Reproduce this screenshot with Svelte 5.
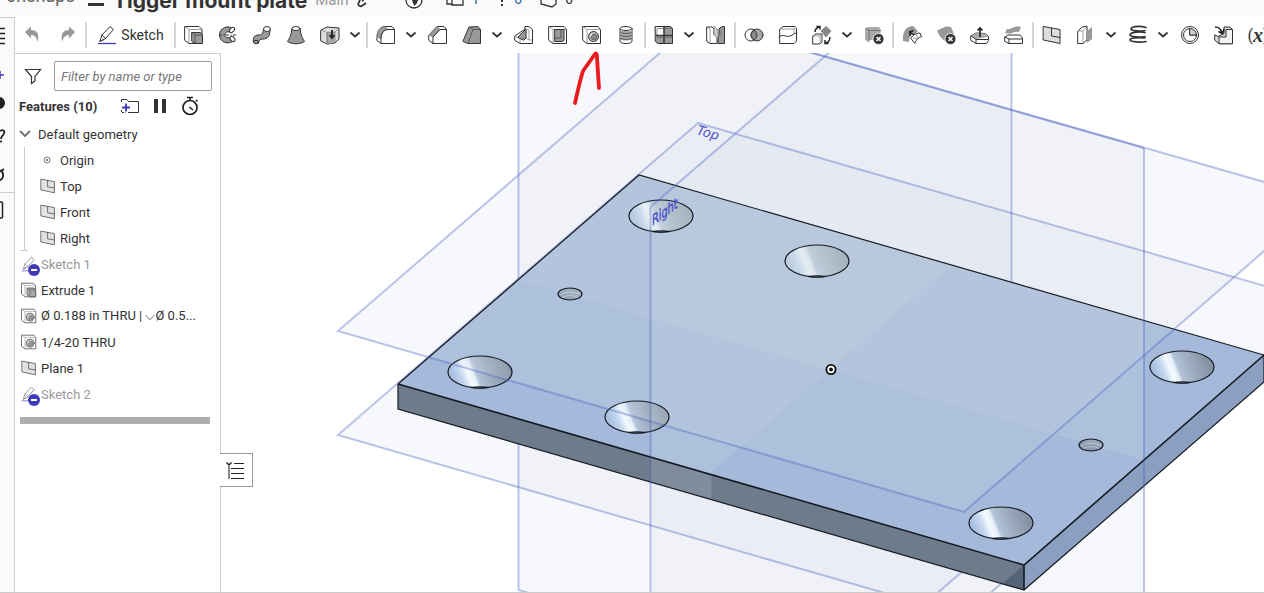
<script>
  const ink = 'stroke="#333" stroke-width="1" stroke-linejoin="round" stroke-linecap="round"';
  const thin = 'stroke="#777" stroke-width=".7" stroke-linejoin="round"';
  const badge = `<circle cx="14.500" cy="14" r="5.500" fill="#333" stroke="#fff" stroke-width=".8"/><path d="M12.500 12l4 4M16.500 12l-4 4" stroke="#fff" stroke-width="1.600"/>`;

  const icons = {
    undo: `<path d="M2 7l6-5.500v3.500c6 0 9 4 6.500 12C14 13 12 10 8 10v3.500z" fill="#999"/>`,
    redo: `<path d="M18 7l-6-5.500v3.500c-6 0-9 4-6.500 12C6 13 8 10 12 10v3.500z" fill="#999"/>`,
    sketch: `<path d="M3 16l2-6 8-8.500 3.500 3L8.500 13.500zM5 10l3.500 3.500M3 16l3-1" fill="#fff" ${ink}/><path d="M1 18.500h18" stroke="#3f3bbd" stroke-width="1.300"/>`,
    extrude: `<path d="M1 1.500h14l3 3v14H5l-4-3z" fill="#fff" ${ink}/><path d="M1 1.500l4 3h13M5 4.500v14" fill="none" ${thin}/><path d="M8 7.500h8l2.500 2v9H11l-3-2z" fill="#999" ${ink}/><path d="M8 7.500l3 2.500h7.500M11 10v8.500" fill="none" stroke="#555"/>`,
    revolve: `<path d="M14 3.500C10-.5 1.500 3 1.500 10S10 20.500 16 15.500l-3-3.500c-3 2-6 0-6-2s2-4 5-3z" fill="#999" ${ink}/><ellipse cx="14" cy="5" rx="3" ry="2" transform="rotate(-45 14 5)" fill="#fff" ${ink}/><ellipse cx="14.500" cy="14" rx="3" ry="2" transform="rotate(45 14.500 14)" fill="#fff" ${ink}/><path d="M1 10h18" stroke="#333" stroke-dasharray="3 1.500 1 1.500"/>`,
    sweep: `<path d="M1.500 17c-1-4 1-7 4.500-7 4 0 5-1 5.500-6l6.500 1c0 6-2 9-7 9-3 0-4 1-4.500 4z" fill="#999" ${ink}/><ellipse cx="15" cy="4" rx="3.500" ry="2.500" fill="#fff" ${ink}/><ellipse cx="4" cy="17" rx="2.500" ry="1.700" fill="#999" ${ink}/>`,
    loft: `<path d="M6 3.500C5.500 9 4 13 1.500 16.500c5 3 12 3 17 0C16 13 14.500 9 14 3.500z" fill="#999" ${ink}/><ellipse cx="10" cy="3.500" rx="4" ry="2" fill="#fff" ${ink}/>`,
    thicken: `<path d="M1 5l6-3 12 1v11l-4 4-8 1-6-3z" fill="#ddd" ${ink}/><path d="M7 7.500L15 7v11l-8 1z" fill="#aaa" ${thin}/><path d="M1 5l6 2.500V19M15 7l4-4" fill="none" ${thin}/><path d="M12 5v8M9.500 10l2.500 3 2.500-3" fill="none" stroke="#222" stroke-width="1.800"/>`,
    fillet: `<path d="M1 12C1 5 5 1.500 9 1.500h7l2.500 3v14H5l-4-3z" fill="#fff" ${ink}/><path d="M1 12C1 5 5 1.500 9 1.500l3 3C8 4.500 5 8 5 14z" fill="#999" ${thin}/><path d="M5 18.500V14c0-6 3-9.500 7-9.500h6.500" fill="none" ${ink}/>`,
    chamfer: `<path d="M1 10l8-8.500h7l2.500 3v14H5l-4-3z" fill="#fff" ${ink}/><path d="M1 10l8-8.500 3 3L5 12z" fill="#999" ${thin}/><path d="M5 18.500V12l7-7.500h6.500" fill="none" ${ink}/>`,
    draft: `<path d="M1 16L7 2l9-.5 2.500 3v14H6z" fill="#999" ${ink}/><path d="M6 18.500l5-14L7 2M11 4.500h7.500" fill="none" stroke="#555"/>`,
    rib: `<path d="M1 11l10-7V1.500h4l3.500 3v14H6l-5-3z" fill="#fff" ${ink}/><path d="M4 12L12 4v9l-2 2z" fill="#999" ${ink}/><path d="M1 11l5 3 6-1 3 2h3.500M6 14v4.500M12 4l3 1.500V15" fill="none" ${thin}/>`,
    shell: `<path d="M1 1.500h15l2.500 3v14H5l-4-3z" fill="#fff" ${ink}/><path d="M1 1.500l4 3v14M5 4.500h13.500" fill="none" ${thin}/><path d="M7 4.500h9v11l-2 1H7z" fill="#999" ${ink}/><path d="M13 4.500V13H7" fill="none" stroke="#555"/>`,
    hole: `<path d="M1 1.500h15l2.500 3v14H5l-4-3z" fill="#fff" ${ink}/><path d="M1 1.500l4 3v14M5 4.500h13.500" fill="none" ${thin}/><circle cx="11.500" cy="11.500" r="5" fill="#bbb" ${ink}/><circle cx="12" cy="12" r="2.800" fill="#888" stroke="#666"/><path d="M10 8.500l-1.500 3" stroke="#fff"/>`,
    thread: `<path d="M4 4v12c0 3.500 12 3.500 12 0V4" fill="#fff" ${ink}/><path d="M4 6v8c3 2 9 2 12 0V6z" fill="#aaa"/><path d="M4 7c3 2 9 2 12 0M4 10c3 2 9 2 12 0M4 13c3 2 9 2 12 0" fill="none" stroke="#555"/><ellipse cx="10" cy="3.500" rx="6" ry="2" fill="#fff" ${ink}/>`,
    pattern: `<path d="M1.500 1.500h15l2 2v15h-15l-2-2z" fill="#999" ${ink}/><path d="M2 2h7l1 2v6H3L2 9z" fill="#fff"/><path d="M10 2v17M1.500 10.500h17" fill="none" stroke="#333" stroke-width="1.500"/><path d="M3 3.500h6.500M3 3.500V10M11 3.500h7.500M11 12.500h7.500M3 12.500h6.500" fill="none" stroke="#666" stroke-width=".7"/>`,
    mirror: `<path d="M1 2h5l2 2v6l3 1.500v7H4l-3-2z" fill="#fff" ${ink}/><path d="M18.500 2v16.500H12V13l1-3V4l2-2z" fill="#999" ${ink}/><path d="M8 1l4 4v9l-4-4z" fill="#ccc" ${thin}/><path d="M1 2l3 2v14.500M15 4v8" fill="none" ${thin}/>`,
    boolean: `<circle cx="7" cy="10" r="6" fill="#fff" ${ink}/><circle cx="13" cy="10" r="6" fill="#aaa" ${ink}/><path d="M10 5c-4 3-4 7 0 10 4-3 4-7 0-10z" fill="#888" ${ink}/>`,
    split: `<path d="M2 4l3-2.500h12l1.500 2V16L16 18.500H2z" fill="#fff" ${ink}/><path d="M2 4h14v4M16 4l2-2" fill="none" ${thin}/><path d="M1 12c5-4 7 1 11-1 3-1 4-3 7-3" fill="none" ${ink}/>`,
    transform: `<path d="M1 11l3-2h6v8l-2 2H1z" fill="#fff" ${ink}/><path d="M1 11h7v8M8 11l2-2" fill="none" ${thin}/><path d="M9 6l5-4.500L19 6l-5 6z" fill="#888" ${thin}/><path d="M3 7c0-3 1-4 4-5M4.500 1.500H8v3M18 12c0 3-1 5-4 6M13 15v3.500h3.500" fill="none" stroke="#222" stroke-width="1.500"/>`,
    remove: `<path d="M1 4l2-2h12l1.500 2v11H5v2l-4-2z" fill="#aaa"/><path d="M1.500 3.500L5 5.500h12M5 5.500V17" fill="none" stroke="#666" stroke-width=".8"/>${badge}`,
    moveFace: `<path d="M1 16C0 6 5 1 11 1l5 5-3 3c-4 0-6 3-6 8z" fill="#999"/><path d="M9 13c2-3 5-5 9-5l1.500 4c-3 0-5 2-6.500 6z" fill="#fff" ${ink}/><path d="M14 9l2 5M11 13l5 1" fill="none" ${thin}/><path d="M12 10L8 7M11.500 5.500L7.500 7l1 4" fill="none" stroke="#222" stroke-width="1.400"/>`,
    deleteFace: `<path d="M1 5c6-1 7-5 14-3l3 7-7 1-2 6c-3-2-6-5-8-11z" fill="#999"/>${badge}`,
    replaceFace: `<path d="M1 11l5-3 9 .5 3.500 3v4l-2 3H6l-5-3z" fill="#fff" ${ink}/><path d="M1 11l5-3 9 .5 3 3.500-12 2z" fill="#aaa"/><path d="M1 11l5 3.500h12.500M6 14.500v4" fill="none" ${ink}/><path d="M10 12V3M7.500 5.500L10 3l2.500 2.500" fill="none" stroke="#222" stroke-width="1.600"/>`,
    offsetSurface: `<path d="M3 4c5 1 7-4 14-2l-2 5c-5-1-7 3-14 1z" fill="#999"/><path d="M1 12l3-2h12l2.500 3v5.500H5l-4-2z" fill="#fff" ${ink}/><path d="M1 12l4 2h13.500M5 14v4.500" fill="none" ${ink}/>`,
    plane: `<path d="M1.500 1.500l16.500 3v14L1.500 15z" fill="#ddd" ${ink}/><path d="M9.500 3v8l8.500 1.500" fill="none" ${ink}/>`,
    surface: `<path d="M2 6l4-4 5-1v14l-4 3.500H2z" fill="#fff" ${ink}/><path d="M2 6h5v12.500M7 6l4-5" fill="none" ${thin}/><path d="M11 6l5-4v12l-5 4z" fill="#999"/>`,
    helix: `<path d="M18 2.500C10 0 3 2 3 4s10 2.500 14 1.500M17 7.500C9 6 2 8 2 10s11 2.500 15 1.500M17 13c-8-1-15 0-15 2s11 2.500 16 1.500" fill="none" stroke="#333" stroke-width="1.700" stroke-linecap="round"/>`,
    measure: `<circle cx="10" cy="10" r="8.500" fill="#fff" ${ink}/><path d="M10 3.500A6.500 6.500 0 1 0 16.500 10H10z" fill="#fff" ${ink}/><path d="M10 3.500A6.500 6.500 0 0 1 16.500 10H10z" fill="#ccc" ${ink}/>`,
    import: `<path d="M1 10l3 1.500 6-3V2h6l2.500 2.500v14H5l-4-3z" fill="#ddd" ${ink}/><path d="M5 18.500V12h7V4.500h6.500V18.500z" fill="#f4f4f4" ${ink}/><path d="M1 2c4 0 6 2 7 6M4.500 6.500L8.500 8.500 10 4" fill="none" stroke="#222" stroke-width="1.600"/>`
  };

  // toolbar groups, a trailing "+" gives the tool a drop-down
  const groups = [
    ['extrude', 'revolve', 'sweep', 'loft', 'thicken+'],
    ['fillet+', 'chamfer', 'draft+', 'rib', 'shell', 'hole', 'thread'],
    ['pattern+', 'mirror'],
    ['boolean', 'split', 'transform+', 'remove'],
    ['moveFace', 'deleteFace', 'replaceFace', 'offsetSurface'],
    ['plane', 'surface+', 'helix+', 'measure', 'import']
  ];

  const geometry = [
    { name: 'Origin', icon: 'origin' },
    { name: 'Top', icon: 'plane' },
    { name: 'Front', icon: 'plane' },
    { name: 'Right', icon: 'plane' }
  ];
  const features = [
    { name: 'Sketch 1', icon: 'sketch', hidden: true },
    { name: 'Extrude 1', icon: 'extrude' },
    { name: 'Ø 0.188 in THRU | ⌵Ø 0.5...', icon: 'hole' },
    { name: '1/4-20 THRU', icon: 'hole' },
    { name: 'Plane 1', icon: 'plane' },
    { name: 'Sketch 2', icon: 'sketch', hidden: true }
  ];

  const countersinks = [
    [661, 216], [817, 261], [480, 372], [637, 417], [1001, 523], [1182, 367]
  ];
  const tapped = [[570, 294], [1091, 445]];

  let filter = $state('');
</script>

{#snippet icon(name, size)}
  <svg width={size} height={size} viewBox="0 0 20 20" aria-hidden="true">{@html icons[name]}</svg>
{/snippet}

{#snippet caret()}
  <svg width="10" height="6" viewBox="0 0 10 6" aria-hidden="true">
    <path d="M1 1l4 3.500L9 1" fill="none" stroke="#333" stroke-width="1.800" stroke-linecap="round" />
  </svg>
{/snippet}

<div class="app">
  <header>
    <div class="title-row">
      <span class="logo">onshape</span>
      <button class="burger" aria-label="Menu"><i></i><i></i><i></i></button>
      <h1>Tigger mount plate</h1>
      <span class="branch">Main</span>
      <svg class="link" width="14" height="16" viewBox="0 0 14 16">
        <path d="M5 9l6-6M3 8l-1.500 3c-1 3 2 4 4 2.500L9 11" fill="none" stroke="#333" stroke-width="1.800" />
      </svg>
      <svg class="globe" width="18" height="18" viewBox="0 0 18 18">
        <circle cx="9" cy="9" r="8" fill="#fff" stroke="#333" stroke-width="1.300" />
        <path d="M7 9h6l-1 3-2.500 3L8 12z" fill="#333" />
      </svg>
      <span class="stat">
        <svg width="18" height="18" viewBox="0 0 18 18">
          <path d="M6 4H1v9h5M6 2h11v12H6z" fill="none" stroke="#333" stroke-width="1.300" />
        </svg>
        <b class="blue">1</b>
      </span>
      <span class="stat">
        <svg width="10" height="18" viewBox="0 0 10 18">
          <path d="M5 3v3M5 8v3M5 13v2" stroke="#333" stroke-width="2" />
        </svg>
        <b class="blue">0</b>
      </span>
      <span class="stat">
        <svg width="18" height="18" viewBox="0 0 18 18">
          <path d="M1 3v10l11 3 4-3V3z" fill="none" stroke="#333" stroke-width="1.300" />
        </svg>
        <b>0</b>
      </span>
    </div>
  </header>

  <div class="body">
    <nav class="rail">
      <button class="first" aria-label="List">
        <svg width="15" height="20" viewBox="0 0 15 20"><path d="M0 2.500h5M0 7.500h5M0 12.500h5M0 17.500h5" stroke="#222" stroke-width="1.700" /></svg>
      </button>
      <button aria-label="Add">
        <svg width="15" height="20" viewBox="0 0 15 20"><path d="M0 10h4M0 6v8" stroke="#3f3bbd" stroke-width="1.500" /></svg>
      </button>
      <button aria-label="Comments">
        <svg width="15" height="20" viewBox="0 0 15 20"><circle cx="-1" cy="8" r="6" fill="#222" /></svg>
      </button>
      <button aria-label="Help">
        <svg width="15" height="20" viewBox="0 0 15 20"><path d="M0 6c3-2 5 0 4 2.500S1 11 1 14M1 15.500v2" fill="none" stroke="#222" stroke-width="1.800" /></svg>
      </button>
      <button class="spaced" aria-label="History">
        <svg width="15" height="20" viewBox="0 0 15 20"><path d="M-2 5c7 1 7 10-1 11M1 6l3-2" fill="none" stroke="#222" stroke-width="1.800" /></svg>
      </button>
      <hr />
      <button aria-label="Panel">
        <svg width="15" height="20" viewBox="0 0 15 20"><path d="M-3 2h4.500q1 0 1 1v14q0 1-1 1H-3" fill="none" stroke="#222" stroke-width="1.500" /></svg>
      </button>
    </nav>

    <div class="work">
      <div class="toolbar" role="toolbar">
        <button class="tool" aria-label="undo">{@render icon('undo', 20)}</button>
        <button class="tool" aria-label="redo">{@render icon('redo', 20)}</button>
        <span class="sep"></span>
        <button class="tool sketch">{@render icon('sketch', 20)}Sketch</button>
        {#each groups as group}
          <span class="sep"></span>
          {#each group as tool}
            {@const name = tool.replace('+', '')}
            <button class="tool" aria-label={name}>{@render icon(name, 20)}</button>
            {#if tool.endsWith('+')}
              <button class="drop" aria-label="{name} options">{@render caret()}</button>
            {/if}
          {/each}
        {/each}
        <button class="tool var">(<i>x</i>)</button>
      </div>

      <div class="split">
        <aside>
          <div class="filter">
            <svg width="18" height="18" viewBox="0 0 18 18" aria-hidden="true">
              <path d="M1.500 2.500h15L11 9.500v4.500L7.500 16.500v-7z" fill="#fff" stroke="#333" stroke-width="1.200" />
            </svg>
            <input type="text" aria-label="Filter" placeholder="Filter by name or type" bind:value={filter} />
          </div>
          <div class="features-head">
            <h2>Features (10)</h2>
            <button aria-label="Add folder">
              <svg width="20" height="18" viewBox="0 0 20 18">
                <path d="M1.500 5V2.500H7L8.500 4.500h10v11H8" fill="none" stroke="#333" stroke-width="1" />
                <path d="M1.500 13v2.500h4" fill="none" stroke="#333" stroke-width="1" stroke-dasharray="2 1" />
                <path d="M2 10.500h8M6 6.500v8" stroke="#3f3bbd" stroke-width="1.800" />
              </svg>
            </button>
            <button aria-label="Pause">
              <svg width="20" height="18" viewBox="0 0 20 18"><path d="M4 2h4v14H4zM12 2h4v14h-4z" fill="#333" /></svg>
            </button>
            <button aria-label="Timing">
              <svg width="20" height="20" viewBox="0 0 20 20">
                <circle cx="10" cy="11.500" r="7" fill="none" stroke="#222" stroke-width="1.700" />
                <path d="M7 1.500h6M10 1.500v3M16 4l1.500 1.500M9.500 11l3.500 3" stroke="#222" stroke-width="1.600" />
              </svg>
            </button>
          </div>

          <div class="row group">
            <svg width="12" height="8" viewBox="0 0 12 8" aria-hidden="true">
              <path d="M1 1l5 5 5-5" fill="none" stroke="#555" stroke-width="1.800" />
            </svg>
            Default geometry
          </div>
          <ul class="nested">
            {#each geometry as item}
              <li class="row">
                {#if item.icon === 'origin'}
                  <svg width="16" height="16" viewBox="0 0 16 16" aria-hidden="true">
                    <circle cx="7" cy="8" r="3" fill="none" stroke="#666" />
                    <circle cx="7" cy="8" r="1.200" fill="#666" />
                  </svg>
                {:else}
                  {@render icon(item.icon, 16)}
                {/if}
                {item.name}
              </li>
            {/each}
          </ul>
          <ul class="list">
            {#each features as item}
              <li class="row" class:hidden={item.hidden}>
                <span class="mark">
                  {@render icon(item.icon, 16)}
                  {#if item.hidden}<i class="minus"></i>{/if}
                </span>
                {item.name}
              </li>
            {/each}
          </ul>
          <div class="rollback"></div>
        </aside>

        <main>
          <svg class="scene" viewBox="221 53 1043 539" preserveAspectRatio="xMinYMin slice">
            <defs>
              <linearGradient id="cone" gradientUnits="userSpaceOnUse" x1="-25" y1="10" x2="25" y2="-10">
                <stop offset="0" stop-color="#a9c0e0" />
                <stop offset=".16" stop-color="#c6d9f0" />
                <stop offset=".28" stop-color="#f4faff" />
                <stop offset=".37" stop-color="#e6f0fa" />
                <stop offset=".43" stop-color="#b3c3d8" />
                <stop offset=".6" stop-color="#a2b1c5" />
                <stop offset="1" stop-color="#8391a3" />
              </linearGradient>
              <clipPath id="solid">
                <path d="M639 175L1264 355V382L1024 590 398 409V384z" />
              </clipPath>
            </defs>

            <!-- planes behind the part -->
            <g class="sheet">
              <path d="M518.500-31L1144 148V769L518.500 590z" />
              <path d="M650.500 207L1011.500-105V529L650.500 841z" />
              <path d="M698 123L1324 303 964 616 338 435z" />
              <path d="M698 20L1324 199 964 512 338 331z" />
            </g>
            <g class="edge">
              <path d="M1144 769L518.500 590V-31L1144 148" />
              <path d="M1011.500-105V529L650.500 841" />
              <path d="M698 123L1324 303 964 616 338 435z" />
            </g>

            <!-- the plate -->
            <path d="M639 175L1264 355 1024 565 398 384z" fill="#a5badb" />
            <path d="M398 384L1024 565V590L398 409z" fill="#6e7b8b" />
            <path d="M1024 565V590L1002 584z" fill="#536478" />
            <path d="M1264 355V382L1024 590V565z" fill="#8b9fc0" />
            {#each countersinks as [x, y]}
              <ellipse rx="32" ry="16" fill="url(#cone)" transform="translate({x} {y})" />
            {/each}
            {#each tapped as [x, y]}
              <g transform="translate({x} {y})">
                <ellipse rx="12" ry="6" fill="#8b99ac" />
                <path d="M-10 1Q0-4 10 0M-9 4Q0-1 9 4" fill="none" stroke="#b9c4d3" />
              </g>
            {/each}

            <!-- planes in front of the part -->
            <g class="sheet front" clip-path="url(#solid)">
              <path d="M698 20L1324 199 964 512 338 331z" />
              <path d="M518-31L1144 148V460L518 280z" />
              <path d="M650.500 207L1011-105V213L711.500 472V592H650.500z" />
            </g>
            <g class="outline">
              <path d="M398 384L639 175 1264 355" />
              <path d="M398 384V409L1024 590 1264 382V355" />
              <path d="M398 384L1024 565 1264 355M1024 565V590" class="bold" />
              {#each countersinks as [x, y]}
                <g transform="translate({x} {y})">
                  <ellipse rx="32" ry="16" />
                  <path d="M-9 15.500Q0 14 9 15.500Q0 17-9 15.500z" />
                </g>
              {/each}
              {#each tapped as [x, y]}
                <ellipse rx="12" ry="6" transform="translate({x} {y})" />
              {/each}
            </g>
            <g class="edge">
              <path d="M1144 148V769" />
              <path d="M650.500 841V207L1011.500-105" />
              <path d="M698 20L1324 199 964 512 338 331z" />
            </g>

            <text class="label slanted" transform="translate(696 134) rotate(16)">Top</text>
            <text class="label strong" transform="translate(652 226) rotate(-36) skewX(-36)">Right</text>

            <circle cx="831" cy="369.500" r="5.500" fill="#111" />
            <circle cx="831" cy="369.500" r="2.800" fill="none" stroke="#fff" stroke-width="1.700" />
          </svg>

          <svg class="annotation" width="40" height="64" viewBox="565 45 40 64" aria-hidden="true">
            <path d="M575 103C578 90 580 80 583 71L595 54Q597 52 597 58L599 88" fill="none" stroke="#ea1c20" stroke-width="3.800" stroke-linecap="round" stroke-linejoin="round" />
          </svg>

          <button class="tab" aria-label="Toggle list">
            <svg width="20" height="20" viewBox="0 0 20 20">
              <path d="M8 3.500h10M5 8.500h13M5 13.500h13M5 18.500h13" stroke="#222" stroke-width="1.200" />
              <path d="M3 6v13" stroke="#888" stroke-width="2" />
              <path d="M.5 2.500L3 5l2.500-2.500" fill="none" stroke="#222" stroke-width="1.500" />
            </svg>
          </button>
        </main>
      </div>
    </div>
  </div>
</div>

<style>
  :global(body) {
    background: #fff;
  }
  .app {
    display: flex;
    flex-direction: column;
    height: 100vh;
    overflow: hidden;
    font-family: Roboto, "Liberation Sans", sans-serif;
    font-size: 13px;
    color: #333;
  }
  button {
    border: 0;
    padding: 0;
    background: none;
    font: inherit;
    color: inherit;
    display: flex;
    align-items: center;
    justify-content: center;
  }
  svg {
    flex: none;
    display: block;
  }
  ul {
    list-style: none;
    margin: 0;
    padding: 0;
  }

  header {
    display: flex;
    align-items: flex-end;
    height: 17px;
    flex: none;
    overflow: hidden;
    background: #fafafa;
  }
  .title-row {
    display: flex;
    align-items: center;
    height: 34px;
    flex: none;
    padding-left: 6px;
    white-space: nowrap;
  }
  .logo {
    width: 82px;
    font-size: 18px;
    line-height: 20px;
    padding-bottom: 8px;
    color: #666;
    box-sizing: border-box;
  }
  .burger {
    flex-direction: column;
    gap: 3px;
    width: 16px;
    margin: 0 9px 3px 0;
  }
  .burger i {
    width: 16px;
    height: 3px;
    background: #333;
  }
  h1 {
    margin: 0 8px 0 0;
    font-family: Inter, sans-serif;
    font-size: 21px;
    font-weight: 700;
  }
  .branch {
    color: #999;
    font-size: 15px;
  }
  .link {
    margin-left: 9px;
  }
  .globe {
    margin: 0 23px 0 34px;
  }
  .stat {
    display: flex;
    align-items: center;
    gap: 7px;
    margin-right: 18px;
  }
  .stat b {
    font-weight: 400;
    font-size: 14px;
    padding-bottom: 3px;
  }
  .blue {
    color: #2b5fa8;
  }

  .body {
    display: flex;
    flex: 1;
    min-height: 0;
    border-bottom: 1px solid #ccc;
  }
  .rail {
    width: 14px;
    flex: none;
    overflow: hidden;
    background: #fafafa;
    border-top: 1px solid #ccc;
    border-right: 1px solid #ccc;
  }
  .rail button {
    width: 15px;
    height: 30px;
  }
  .rail .first {
    height: 36px;
    margin-bottom: 6px;
  }
  .rail .spaced {
    margin-top: 10px;
  }
  .rail hr {
    border: 0;
    border-top: 1px solid #ccc;
    margin: 2px 0;
  }
  .work {
    display: flex;
    flex-direction: column;
    flex: 1;
    min-width: 0;
  }
  .toolbar {
    display: flex;
    align-items: center;
    height: 36px;
    flex: none;
    overflow: hidden;
    padding-left: 1px;
  }
  .tool {
    width: 34px;
    height: 30px;
    flex: none;
  }
  .sketch {
    width: 85px;
    gap: 4px;
    font-size: 14px;
  }
  .drop {
    width: 18px;
    height: 30px;
    flex: none;
    justify-content: flex-start;
    padding-left: 3px;
  }
  .sep {
    flex: none;
    width: 2px;
    height: 26px;
    margin: 0 1px;
    background: #d5d5d5;
  }
  .var {
    font-size: 16px;
  }
  .var i {
    font-family: "Liberation Serif", serif;
    font-size: 20px;
    font-weight: 700;
  }

  .split {
    display: flex;
    flex: 1;
    min-height: 0;
  }
  aside {
    width: 205px;
    flex: none;
    border-top: 1px solid #ccc;
    border-right: 1px solid #ccc;
  }
  .filter {
    display: flex;
    align-items: center;
    gap: 12px;
    padding: 7px 8px 0 9px;
  }
  .filter input {
    flex: 1;
    min-width: 0;
    height: 30px;
    box-sizing: border-box;
    border: 1px solid #999;
    border-radius: 2px;
    padding: 0 6px;
    font: italic 13px Roboto, sans-serif;
  }
  .filter input::placeholder {
    color: #777;
  }
  .features-head {
    display: flex;
    align-items: center;
    height: 30px;
    gap: 10px;
    padding-left: 4px;
  }
  h2 {
    margin: 0;
    width: 91px;
    font-size: 13px;
    font-weight: 700;
  }
  .row {
    display: flex;
    align-items: center;
    gap: 4px;
    height: 26px;
    white-space: nowrap;
  }
  .group {
    gap: 7px;
    padding-left: 4px;
  }
  .nested {
    position: relative;
    padding-left: 25px;
  }
  .nested::before {
    content: "";
    position: absolute;
    left: 9px;
    top: 0;
    bottom: 0;
    border-left: 1px solid #ccc;
  }
  .nested::after {
    content: "";
    position: absolute;
    left: 5px;
    bottom: 0;
    width: 8px;
    border-top: 1px solid #ccc;
  }
  .list {
    padding-left: 6px;
  }
  .row :global(svg) {
    opacity: 0.85;
  }
  .hidden {
    color: #999;
  }
  .mark {
    position: relative;
  }
  .hidden .mark :global(svg) {
    opacity: 0.6;
  }
  .minus {
    position: absolute;
    right: -3px;
    bottom: -4px;
    width: 12px;
    height: 12px;
    border-radius: 50%;
    background: linear-gradient(#fff, #fff) center / 6px 2px no-repeat #3f3bb8;
  }
  .rollback {
    height: 7px;
    margin: 10px 10px 0 5px;
    background: #aeaeae;
  }

  main {
    position: relative;
    flex: 1;
    min-width: 0;
  }
  .scene {
    width: 100%;
    height: 100%;
  }
  .sheet path {
    fill: rgb(208, 214, 232);
    fill-opacity: 0.18;
  }
  .front path {
    fill: rgb(208, 220, 228);
  }
  .edge path {
    fill: none;
    stroke: rgb(62, 88, 190);
    stroke-opacity: 0.34;
    stroke-width: 2;
  }
  .outline {
    fill: none;
    stroke: #151a22;
    stroke-width: 1.2;
  }
  .bold {
    stroke-width: 1.6;
  }
  .label {
    font: 13px "DejaVu Sans", sans-serif;
    fill: #4a4fcb;
  }
  .slanted {
    font-style: italic;
  }
  .strong {
    font-size: 12px;
    stroke: #4a4fcb;
    stroke-width: 0.4;
  }
  .annotation {
    position: absolute;
    left: 344px;
    top: -8px;
  }
  .tab {
    position: absolute;
    left: -1px;
    top: 400px;
    width: 33px;
    height: 34px;
    background: #fff;
    border: 1px solid #999;
    border-left: 0;
  }
</style>
